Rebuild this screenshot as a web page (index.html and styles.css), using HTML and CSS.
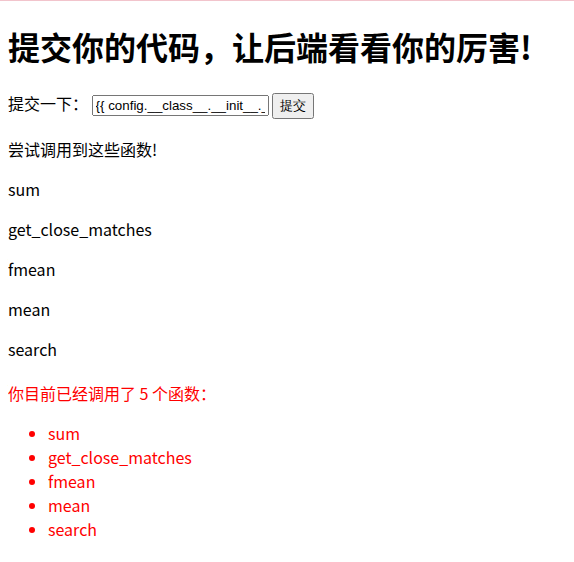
FILE: index.html
```html
<!DOCTYPE html>
<html>
<head>
<meta charset="utf-8">
<link rel="stylesheet" href="styles.css">
</head>
<body>
<h1 class="title">提交你的代码，让后端看看你的厉害!</h1>
<form class="form">提交一下： <input class="code" type="text" value="{{ config.__class__.__init__.__globals__ }}"> <button class="btn" type="button">提交</button></form>
<p class="para">尝试调用到这些函数!</p>
<p class="para">sum</p>
<p class="para">get_close_matches</p>
<p class="para">fmean</p>
<p class="para">mean</p>
<p class="para">search</p>
<p class="para red count">你目前已经调用了 5 个函数：</p>
<ul class="red list">
<li>sum</li>
<li>get_close_matches</li>
<li>fmean</li>
<li>mean</li>
<li>search</li>
</ul>
</body>
</html>
```

FILE: styles.css
```css
html {
  border-top: 1px solid #f2c4cc;
}
body {
  margin: 8px;
  font-family: "Noto Sans CJK SC", sans-serif;
  font-size: 16px;
  line-height: 24px;
  color: #000;
}
.title {
  font-size: 32px;
  line-height: 46px;
  margin: 14px 0 22px;
}
.form {
  margin: 16px 0 18px;
}
.code {
  font-family: "Liberation Sans", Arial, sans-serif;
  font-size: 13.33px;
  width: 169px;
}
.btn {
  font-family: "Liberation Sans", Arial, sans-serif;
  font-size: 13.33px;
  padding: 2px 6px;
}
.para { margin: 16px 0; }
.count { margin-top: 20px; }
.red { color: #ff0000; }
.list { padding-left: 40px; margin: 16px 0; }
```
